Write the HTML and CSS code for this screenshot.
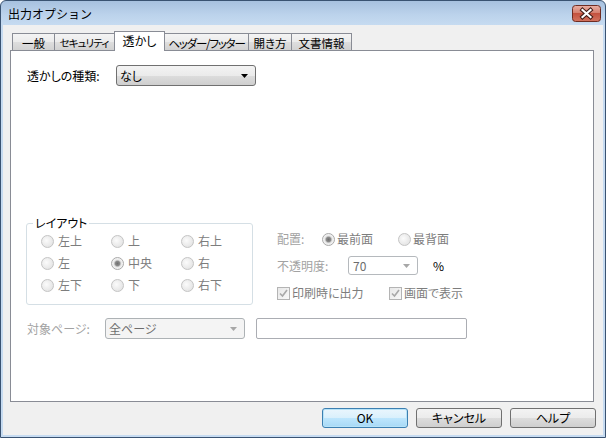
FILE: index.html
```html
<!DOCTYPE html>
<html lang="ja">
<head>
<meta charset="utf-8">
<title>出力オプション</title>
<link rel="stylesheet" href="styles.css">
</head>
<body>
<div class="window">
  <div class="titlebar">
    <span class="title">出力オプション</span>
    <button class="close" aria-label="閉じる">
      <svg width="29" height="17" viewBox="0 0 29 17">
        <defs>
          <linearGradient id="cg" x1="0" y1="0" x2="0" y2="1">
            <stop offset="0" stop-color="#e9b0a5"/>
            <stop offset="0.45" stop-color="#d6806f"/>
            <stop offset="0.5" stop-color="#c4523f"/>
            <stop offset="1" stop-color="#d37460"/>
          </linearGradient>
        </defs>
        <rect x="0.5" y="0.5" width="28" height="16" rx="3" fill="url(#cg)" stroke="#6e2c22"/>
        <path d="M10.5 5 L18.5 12 M18.5 5 L10.5 12" stroke="#3f1a15" stroke-width="4.2" stroke-linecap="square"/>
        <path d="M10.5 5 L18.5 12 M18.5 5 L10.5 12" stroke="#ffffff" stroke-width="2.2" stroke-linecap="square"/>
      </svg>
    </button>
  </div>
  <div class="client">
    <div class="tabs">
      <div class="tab w1">一般</div>
      <div class="tab w2">セキュリティ</div>
      <div class="tab w3 active">透かし</div>
      <div class="tab w4">ヘッダー/フッター</div>
      <div class="tab w5">開き方</div>
      <div class="tab w6">文書情報</div>
    </div>
    <div class="panel">
      <div class="type-row">
        <span class="label type-label">透かしの種類:</span>
        <div class="combo combo-type">
          <span>なし</span>
          <svg class="arrow" width="7" height="4" viewBox="0 0 7 4"><path d="M0 0 H7 L3.5 4 Z" fill="#000"/></svg>
        </div>
      </div>
      <div class="middle">
        <div class="group">
          <span class="group-title">レイアウト</span>
          <div class="radio-grid">
            <label class="radio"><span class="rb"></span>左上</label>
            <label class="radio"><span class="rb"></span>上</label>
            <label class="radio"><span class="rb"></span>右上</label>
            <label class="radio"><span class="rb"></span>左</label>
            <label class="radio"><span class="rb on"></span>中央</label>
            <label class="radio"><span class="rb"></span>右</label>
            <label class="radio"><span class="rb"></span>左下</label>
            <label class="radio"><span class="rb"></span>下</label>
            <label class="radio"><span class="rb"></span>右下</label>
          </div>
        </div>
        <div class="options">
          <div class="opt-row r1">
            <span class="label dim lbl-place">配置:</span>
            <label class="radio place1"><span class="rb on"></span>最前面</label>
            <label class="radio"><span class="rb"></span>最背面</label>
          </div>
          <div class="opt-row r2">
            <span class="label dim lbl-opacity">不透明度:</span>
            <div class="combo combo-opacity">
              <span>70</span>
              <svg class="arrow" width="7" height="4" viewBox="0 0 7 4"><path d="M0 0 H7 L3.5 4 Z" fill="#a7a7a7"/></svg>
            </div>
            <span class="pct">%</span>
          </div>
          <div class="opt-row r3">
            <label class="check check1"><span class="cb"><svg width="11" height="11" viewBox="0 0 11 11"><path d="M2 5.5 L4.5 8 L9 2" fill="none" stroke="#a8a8a8" stroke-width="1.6"/></svg></span>印刷時に出力</label>
            <label class="check"><span class="cb"><svg width="11" height="11" viewBox="0 0 11 11"><path d="M2 5.5 L4.5 8 L9 2" fill="none" stroke="#a8a8a8" stroke-width="1.6"/></svg></span>画面で表示</label>
          </div>
        </div>
      </div>
      <div class="pages-row">
        <span class="label dim lbl-pages">対象ページ:</span>
        <div class="combo combo-pages">
          <span>全ページ</span>
          <svg class="arrow" width="7" height="4" viewBox="0 0 7 4"><path d="M0 0 H7 L3.5 4 Z" fill="#a7a7a7"/></svg>
        </div>
        <div class="textbox"></div>
      </div>
    </div>
    <div class="buttons">
      <button class="btn default">OK</button>
      <button class="btn">キャンセル</button>
      <button class="btn">ヘルプ</button>
    </div>
  </div>
</div>
</body>
</html>
```

FILE: styles.css
```css
* { box-sizing: border-box; }
html, body { margin: 0; padding: 0; }
body {
  width: 606px;
  height: 438px;
  overflow: hidden;
  background: #ffffff;
  font-family: "Noto Sans CJK JP", "Noto Sans", sans-serif;
  font-size: 12px;
  color: #000;
}

.window {
  width: 606px;
  height: 438px;
  border: 1px solid #3a5372;
  border-radius: 6px 6px 0 0;
  background: linear-gradient(to bottom, #a7c1df 0, #bcd3ec 14px, #c6dbf1 24px, #c6dbf1 100%);
  padding: 0 2px 2px 2px;
  display: flex;
  flex-direction: column;
}

.titlebar {
  height: 24px;
  display: flex;
  justify-content: space-between;
  align-items: flex-start;
}
.title {
  padding-left: 5px;
  line-height: 25px;
  font-size: 12px;
  color: #000;
}
.close {
  width: 29px;
  height: 17px;
  margin: 4px 2px 0 0;
  padding: 0;
  border: 0;
  background: none;
  display: block;
}
.close svg { display: block; }

.client {
  flex: 1;
  background: #f0f0f0;
  padding: 6px 7px 0 7px;
  display: flex;
  flex-direction: column;
  font-feature-settings: "palt" 1;
}

.tabs {
  display: flex;
  align-items: flex-end;
  height: 19px;
  margin-left: 2px;
}
.tab {
  height: 17px;
  border: 1px solid #898c95;
  border-bottom: 0;
  background: linear-gradient(to bottom, #f4f4f4, #ebebeb 50%, #dedede 50%, #d2d2d2);
  display: flex;
  align-items: center;
  justify-content: center;
  margin-left: -1px;
  line-height: 14px;
  padding-top: 1px;
  white-space: nowrap;
  font-size: 11.5px;
  letter-spacing: -0.7px;
  overflow: hidden;
}
.tab.w1 { width: 43px; margin-left: 0; letter-spacing: 0; }
.tab.w2 { width: 63px; font-size: 10.5px; letter-spacing: -0.9px; padding-right: 3px; }
.tab.w3 { width: 51px; }
.tab.w4 { width: 87px; letter-spacing: -1.2px; padding-left: 2px; }
.tab.w5 { width: 44px; letter-spacing: 0; }
.tab.w6 { width: 61px; letter-spacing: 0; }
.tab.active {
  height: 20px;
  margin-left: -3px;
  margin-right: -2px;
  margin-bottom: -1px;
  background: #ffffff;
  position: relative;
  z-index: 1;
  padding-top: 0;
  padding-bottom: 2px;
  font-size: 12px;
  letter-spacing: 0;
}

.panel {
  width: 584px;
  height: 352px;
  border: 1px solid #898c95;
  background: #ffffff;
  padding: 14px 0 0 16px;
  display: flex;
  flex-direction: column;
}

.label { white-space: nowrap; line-height: 14px; }
.dim { color: #a2a2a2; }

.type-row {
  display: flex;
  align-items: center;
  height: 21px;
}
.type-label { width: 89px; }

.combo {
  display: flex;
  align-items: center;
  justify-content: space-between;
  border-radius: 3px;
  padding: 0 7px 0 3px;
  line-height: 14px;
}
.combo-type {
  width: 140px;
  height: 21px;
  border: 1px solid #707070;
  background: linear-gradient(to bottom, #f3f3f3, #ebebeb 50%, #dddddd 50%, #cfcfcf);
}
.combo-opacity {
  width: 70px;
  height: 19px;
  border: 1px solid #b5b9bd;
  background: #ffffff;
  color: #6d6d6d;
  padding-left: 4px;
}
.combo-pages {
  width: 140px;
  height: 21px;
  border: 1px solid #adb2b5;
  background: #f4f4f4;
  color: #6d6d6d;
}
.arrow { display: block; flex: none; }

.middle {
  display: flex;
  margin-top: 130px;
}

.group {
  width: 227px;
  margin-left: -1px;
  margin-top: 7px;
  border: 1px solid #d5dfe5;
  border-radius: 3px;
  padding: 0 0 11px 14px;
}
.group-title {
  display: block;
  width: max-content;
  margin: -8px 0 0 -8px;
  padding: 0 2px;
  background: #ffffff;
  line-height: 14px;
  color: #000;
}
.radio-grid {
  display: grid;
  grid-template-columns: 70px 70px 70px;
  grid-auto-rows: 16px;
  row-gap: 6px;
  margin-top: 3px;
}

.radio, .check {
  display: flex;
  align-items: center;
  white-space: nowrap;
  color: #7d7d7d;
  line-height: 14px;
  height: 16px;
}
.rb {
  width: 13px;
  height: 13px;
  flex: none;
  border-radius: 50%;
  border: 1px solid #c4c4c4;
  background: radial-gradient(circle at 40% 40%, #fbfbfb 0, #e6e6e6 70%, #dcdcdc 100%);
  margin-right: 4px;
}
.rb.on {
  border-color: #a9a9a9;
  background: radial-gradient(circle at 50% 50%, #6f6f6f 0, #8a8a8a 2.2px, #bdbdbd 3px, #e9e9e9 3.8px, #f4f4f4 5.5px);
}

.options {
  margin-left: 24px;
  padding-top: 15px;
  display: flex;
  flex-direction: column;
}
.opt-row {
  display: flex;
  align-items: center;
}
.r1 { height: 16px; }
.r2 { height: 19px; margin-top: 9px; }
.r3 { height: 16px; margin-top: 10px; }
.lbl-place { width: 45px; }
.lbl-opacity { width: 71px; }
.place1 { width: 76px; }
.opt-row .rb { margin-right: 2px; }
.pct { margin-left: 15px; color: #000; }

.cb {
  width: 13px;
  height: 13px;
  flex: none;
  border: 1px solid #b4b4b4;
  background: linear-gradient(to bottom right, #e8e8e8, #f8f8f8);
  margin-right: 2px;
  display: flex;
  align-items: center;
  justify-content: center;
}
.cb svg { display: block; }
.check1 { width: 112px; }

.pages-row {
  display: flex;
  align-items: center;
  margin-top: 13px;
  height: 21px;
}
.lbl-pages { width: 78px; }
.textbox {
  width: 211px;
  height: 21px;
  margin-left: 11px;
  border: 1px solid #abadb3;
  border-radius: 2px;
  background: #ffffff;
}

.buttons {
  display: flex;
  justify-content: flex-end;
  gap: 8px;
  margin-top: 6px;
}
.btn {
  width: 86px;
  height: 20px;
  padding: 0;
  border: 1px solid #707070;
  border-radius: 3px;
  background: linear-gradient(to bottom, #f3f3f3, #ebebeb 50%, #dddddd 50%, #cfcfcf);
  font-family: "Noto Sans CJK JP", "Noto Sans", sans-serif;
  font-size: 12px;
  font-feature-settings: "palt" 1;
  color: #000;
  line-height: 14px;
}
.btn.default {
  border-color: #3c7fb1;
  background: linear-gradient(to bottom, #eaf6fd, #d9f0fc 50%, #bee6fd 50%, #a7d9f5);
  box-shadow: inset 0 0 0 1px #b7e3f8;
}
```
